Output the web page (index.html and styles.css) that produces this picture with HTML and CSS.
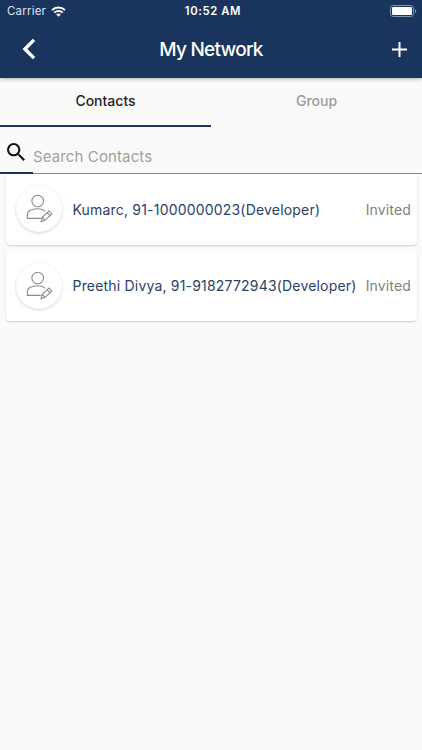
FILE: index.html
```html
<!DOCTYPE html>
<html lang="en">
<head>
  <meta charset="UTF-8" />
  <meta name="viewport" content="width=device-width, initial-scale=1" />
  <title>My Network</title>
  <link rel="stylesheet" href="styles.css">
</head>
<body>

  <header class="header">
    <div class="status">
      <div class="carrier">
        <span>Carrier</span>
        <svg width="15" height="11" viewBox="0 0 15 11" fill="none" stroke="#fff" stroke-width="2">
          <path d="M1 4.1a9.3 9.3 0 0 1 13 0" />
          <path d="M3.3 6.6a6 6 0 0 1 8.4 0" />
          <path d="M7.5 10.8 5.2 8.5a3.3 3.3 0 0 1 4.6 0z" fill="#fff" stroke="none" />
        </svg>
      </div>
      <span class="time">10:52 AM</span>
      <svg class="battery" width="27" height="12" viewBox="0 0 27 12">
        <rect x=".5" y=".5" width="23" height="11" rx="2.7" fill="none" stroke="#8394ad" />
        <rect x="2" y="2" width="20" height="8" rx="1.2" fill="#fff" />
        <path d="M25 4v4c1.8-.6 1.8-3.4 0-4z" fill="#8394ad" />
      </svg>
    </div>
    <div class="navbar">
      <svg class="back" width="14" height="22" viewBox="0 0 14 22" fill="none" stroke="#fff" stroke-width="3.4">
        <path d="M12 1.9 2.9 11 12 20.1" />
      </svg>
      <h1>My Network</h1>
      <svg class="add" width="15" height="15" viewBox="0 0 15 15" stroke="#fff" stroke-width="2">
        <path d="M7.5 0v15M0 7.5h15" />
      </svg>
    </div>
  </header>

  <nav class="tabs">
    <div class="tab active">Contacts</div>
    <div class="tab">Group</div>
  </nav>

  <!-- Search -->
  <div class="search">
    <div class="search-icon">
      <svg width="18" height="18" viewBox="3 3 17.5 17.5" fill="#111">
        <path d="M15.5 14h-.79l-.28-.27A6.47 6.47 0 0 0 16 9.5 6.5 6.5 0 1 0 9.5 16c1.61 0 3.09-.59 4.23-1.57l.27.28v.79l5 4.99L20.49 19l-4.99-5zm-6 0a4.5 4.5 0 1 1 0-9 4.5 4.5 0 0 1 0 9z" />
      </svg>
    </div>
    <div class="search-field">Search Contacts</div>
  </div>

  <!-- Contact list -->
  <main class="list">
    <div class="card">
      <div class="avatar">
        <svg width="28" height="30" viewBox="0 0 28 30" fill="none" stroke="#8c8c8c" stroke-width="1.1">
          <circle cx="12.7" cy="7" r="5.8" />
          <path d="M15.8 24.4H2.3v-3.2c0-4.3 4.4-6.5 10-6.5 3.8 0 6.4.8 8 2.7" />
          <path d="m16.1 27.6 1.1-4.3 6.8-6.3 2.8 2.9-6.7 6.4zM17.2 23.3l2.9 3M22.1 18.7l2.8 3" />
        </svg>
      </div>
      <span class="name">Kumarc, 91-1000000023(Developer)</span>
      <span class="state">Invited</span>
    </div>
    <div class="card">
      <div class="avatar">
        <svg width="28" height="30" viewBox="0 0 28 30" fill="none" stroke="#8c8c8c" stroke-width="1.1">
          <circle cx="12.7" cy="7" r="5.8" />
          <path d="M15.8 24.4H2.3v-3.2c0-4.3 4.4-6.5 10-6.5 3.8 0 6.4.8 8 2.7" />
          <path d="m16.1 27.6 1.1-4.3 6.8-6.3 2.8 2.9-6.7 6.4zM17.2 23.3l2.9 3M22.1 18.7l2.8 3" />
        </svg>
      </div>
      <span class="name">Preethi Divya, 91-9182772943(Developer)</span>
      <span class="state">Invited</span>
    </div>
  </main>

</body>
</html>
```

FILE: styles.css
```css
* {
  box-sizing: border-box;
}
body {
  font-family: Inter, "Liberation Sans", sans-serif;
  background-color: #fafafa;
  margin: 0;
  min-height: 750px;
}
svg {
  display: block;
  flex-shrink: 0;
}
.header {
  position: relative;
  height: 78px;
  background-color: #19355d;
  color: white;
  box-shadow: 0 1px 4px rgba(0, 0, 0, 0.3);
}
.status {
  display: grid;
  grid-template-columns: 1fr auto 1fr;
  align-items: center;
  height: 22px;
  padding: 0 5px 0 7px;
  font-size: 11.5px;
}
.carrier {
  display: flex;
  align-items: center;
  gap: 5px;
  color: #dfe5ee;
  letter-spacing: 0.2px;
}
.time {
  margin-left: 2px;
  font-weight: 600;
  font-size: 11.3px;
  letter-spacing: 0.6px;
}
.battery {
  justify-self: end;
}
.navbar {
  display: grid;
  grid-template-columns: 1fr auto 1fr;
  align-items: center;
  height: 54px;
  padding: 0 15px 0 22px;
}
.navbar h1 {
  margin: 0 7px 0 0;
  font-size: 19px;
  font-weight: 500;
  letter-spacing: -0.75px;
}
.add {
  justify-self: end;
}
.tabs {
  display: flex;
  height: 49px;
}
.tab {
  flex: 1;
  padding-top: 14px;
  border-bottom: 2px solid transparent;
  color: #9b9b9b;
  font-size: 14px;
  font-weight: 500;
  line-height: 18px;
  text-align: center;
}
.tab.active {
  color: #222;
  border-color: #19355d;
}
.search {
  display: flex;
  height: 47px;
}
.search-icon {
  width: 33px;
  padding: 16px 0 0 7px;
  border-bottom: 2px solid #19355d;
}
.search-field {
  flex: 1;
  padding-top: 20px;
  border-bottom: 1px solid #888;
  color: #a0a0a0;
  font-size: 15px;
  line-height: 20px;
  letter-spacing: 0.12px;
}
.list {
  display: flex;
  flex-direction: column;
  gap: 6px;
  padding: 0 5.5px;
}
.card {
  display: flex;
  align-items: center;
  height: 71px;
  padding: 0 5.5px 0 10.5px;
  background-color: white;
  border-radius: 4px;
  box-shadow: 0 1px 2px rgba(0, 0, 0, 0.18);
  font-size: 14px;
  line-height: 18px;
  white-space: nowrap;
}
.card + .card {
  height: 70px;
}
.avatar {
  display: flex;
  align-items: center;
  justify-content: center;
  flex-shrink: 0;
  width: 46px;
  height: 46px;
  margin: -1px 10.5px 0 0;
  border-radius: 50%;
  background-color: white;
  box-shadow: 0 1px 3px rgba(0, 0, 0, 0.18);
}
.name {
  color: #2b4166;
  letter-spacing: 0.19px;
}
.state {
  margin-left: auto;
  color: #808080;
  letter-spacing: 0.15px;
}
```
